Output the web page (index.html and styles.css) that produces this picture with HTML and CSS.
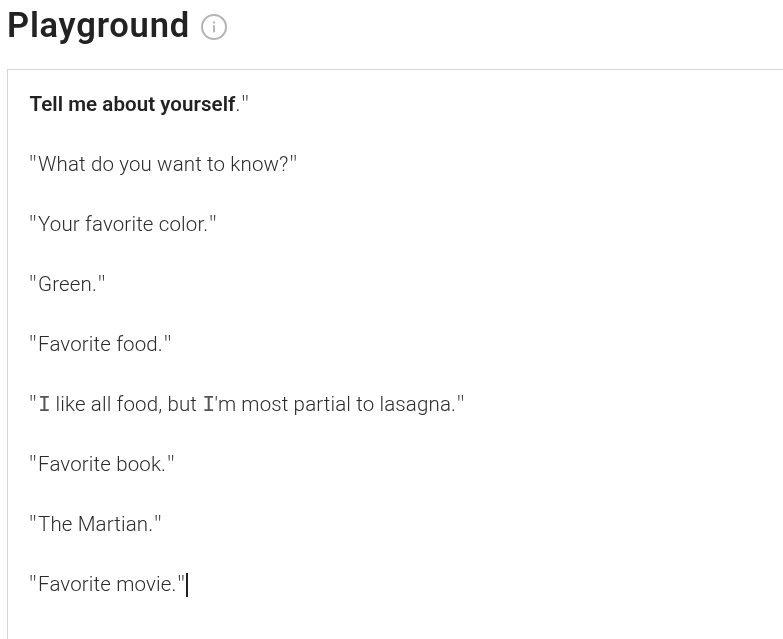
FILE: index.html
```html
<!DOCTYPE html>
<html lang="en">
<head>
<meta charset="utf-8">
<title>Playground</title>
<link rel="stylesheet" href="styles.css">
</head>
<body>
<header class="header">
<h1 class="title">Playground</h1>
<svg class="info" viewBox="0 0 28 28" fill="none" stroke="#b4b4b4" stroke-width="2"><circle cx="14" cy="14" r="12"/><path d="M14 12.3v7M14 8.5v2"/></svg>
</header>
<main class="editor">
<p class="line"><b>Tell me about yourself</b>.<span class="q">"</span></p>
<p class="line"><span class="q">"</span>What do you want to know?<span class="q">"</span></p>
<p class="line"><span class="q">"</span>Your favorite color.<span class="q">"</span></p>
<p class="line"><span class="q">"</span>Green.<span class="q">"</span></p>
<p class="line"><span class="q">"</span>Favorite food.<span class="q">"</span></p>
<p class="line"><span class="q">"</span><span class="cap-i">I</span> like all food, but <span class="cap-i">I</span>'m most partial to lasagna.<span class="q">"</span></p>
<p class="line"><span class="q">"</span>Favorite book.<span class="q">"</span></p>
<p class="line"><span class="q">"</span>The Martian.<span class="q">"</span></p>
<p class="line"><span class="q">"</span>Favorite movie.<span class="q">"</span><i class="caret"></i></p>
</main>
</body>
</html>
```
FILE: styles.css
```css
* { box-sizing: border-box; }
body { margin: 0; height: 639px; overflow: hidden; background: #fff; color: #2c2c2c; font-family: Roboto, sans-serif; display: flex; flex-direction: column; }
.header { display: flex; align-items: center; height: 52px; padding-left: 7px; gap: 10px; flex: none; will-change: transform; }
.title { margin: 0 0 2px; font-size: 34.5px; font-weight: 600; color: #222; letter-spacing: .75px; }
.info { width: 28px; height: 28px; margin-top: 2px; }
.editor { margin: 17px 0 0 7px; border: 1px solid #d5d5d5; border-right: 0; border-bottom: 0; padding: 19px 21px; flex: 1; will-change: transform; }
.line { margin: 0 0 30px; height: 30px; line-height: 30px; font-size: 20.5px; font-weight: 300; letter-spacing: .13px; white-space: nowrap; }
.line b { font-weight: 600; color: #222; letter-spacing: .06px; margin-left: .5px; }
.q { font-family: "Open Sans", sans-serif; font-size: 22px; letter-spacing: 1.3px; line-height: 1; }
.q:last-of-type { margin-left: .8px; }
.cap-i { font-family: "Liberation Mono", monospace; font-size: 21.5px; letter-spacing: -.6px; line-height: 1; color: #555; }
.caret { display: inline-block; width: 2px; height: 24px; margin-left: -.6px; vertical-align: -6px; background: #222; }
```
